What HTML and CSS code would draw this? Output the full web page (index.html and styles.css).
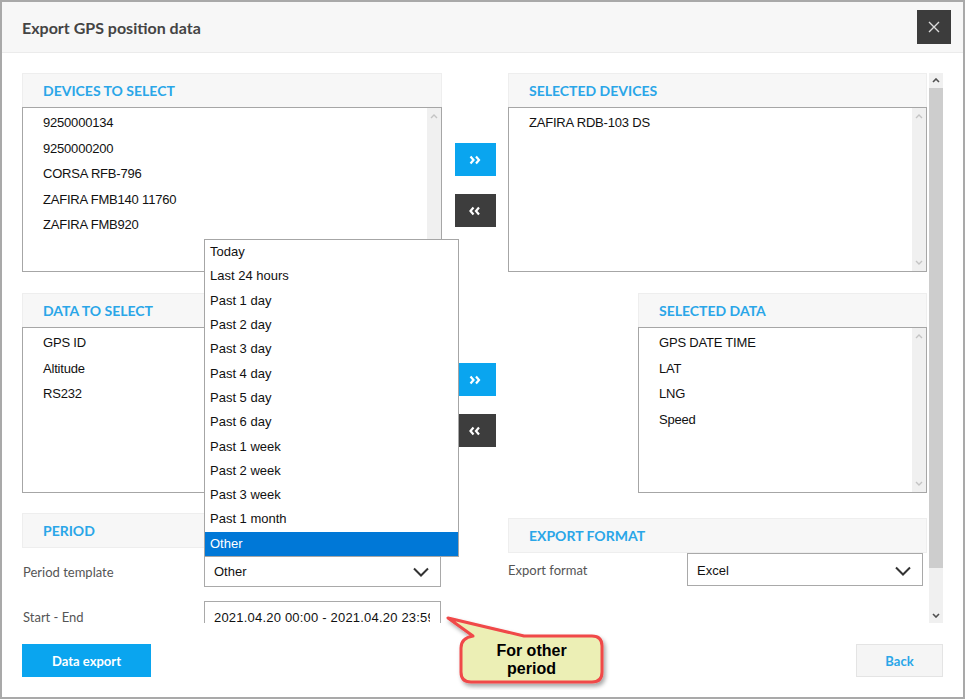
FILE: index.html
```html
<!DOCTYPE html>
<html lang="en">
<head>
    <meta charset="UTF-8">
    <title>Export GPS position data</title>
    <link rel="stylesheet" href="styles.css">
</head>
<body>
    <div class="dialog">
        <div class="dialog-header">
            <h1 class="dialog-title">Export GPS position data</h1>
            <button class="close-btn" aria-label="Close">
                <svg width="12" height="12" viewBox="0 0 12 12"><path d="M1 1L11 11M11 1L1 11" stroke="#dcdcdc" stroke-width="1.4"/></svg>
            </button>
        </div>

        <div class="dialog-body">
            <div class="scroll-area">
                <!-- devices -->
                <div class="picker-row">
                    <div class="panel">
                        <div class="panel-head">DEVICES TO SELECT</div>
                        <div class="list-box">
                            <ul class="list-items">
                                <li>9250000134</li>
                                <li>9250000200</li>
                                <li>CORSA RFB-796</li>
                                <li>ZAFIRA FMB140 11760</li>
                                <li>ZAFIRA FMB920</li>
                            </ul>
                            <div class="list-scroll">
                                <svg class="arrow" width="8" height="5" viewBox="0 0 8 5"><path d="M1 4L4 1L7 4" /></svg>
                                <svg class="arrow" width="8" height="5" viewBox="0 0 8 5"><path d="M1 1L4 4L7 1" /></svg>
                            </div>
                        </div>
                    </div>
                    <div class="move-buttons">
                        <button class="move-btn add"><svg width="12" height="10" viewBox="0 0 12 10"><path d="M1.5 1.5L4.5 5L1.5 8.5M7 1.5L10 5L7 8.5" /></svg></button>
                        <button class="move-btn remove"><svg width="12" height="10" viewBox="0 0 12 10"><path d="M4.5 1.5L1.5 5L4.5 8.5M10 1.5L7 5L10 8.5" /></svg></button>
                    </div>
                    <div class="panel">
                        <div class="panel-head">SELECTED DEVICES</div>
                        <div class="list-box">
                            <ul class="list-items">
                                <li>ZAFIRA RDB-103 DS</li>
                            </ul>
                            <div class="list-scroll">
                                <svg class="arrow" width="8" height="5" viewBox="0 0 8 5"><path d="M1 4L4 1L7 4" /></svg>
                                <svg class="arrow" width="8" height="5" viewBox="0 0 8 5"><path d="M1 1L4 4L7 1" /></svg>
                            </div>
                        </div>
                    </div>
                </div>

                <!-- data fields -->
                <div class="picker-row second">
                    <div class="panel">
                        <div class="panel-head">DATA TO SELECT</div>
                        <div class="list-box tall">
                            <ul class="list-items">
                                <li>GPS ID</li>
                                <li>Altitude</li>
                                <li>RS232</li>
                            </ul>
                            <div class="list-scroll">
                                <svg class="arrow" width="8" height="5" viewBox="0 0 8 5"><path d="M1 4L4 1L7 4" /></svg>
                                <svg class="arrow" width="8" height="5" viewBox="0 0 8 5"><path d="M1 1L4 4L7 1" /></svg>
                            </div>
                        </div>
                    </div>
                    <div class="move-buttons">
                        <button class="move-btn add"><svg width="12" height="10" viewBox="0 0 12 10"><path d="M1.5 1.5L4.5 5L1.5 8.5M7 1.5L10 5L7 8.5" /></svg></button>
                        <button class="move-btn remove"><svg width="12" height="10" viewBox="0 0 12 10"><path d="M4.5 1.5L1.5 5L4.5 8.5M10 1.5L7 5L10 8.5" /></svg></button>
                    </div>
                    <div class="panel narrow">
                        <div class="panel-head">SELECTED DATA</div>
                        <div class="list-box tall">
                            <ul class="list-items">
                                <li>GPS DATE TIME</li>
                                <li>LAT</li>
                                <li>LNG</li>
                                <li>Speed</li>
                            </ul>
                            <div class="list-scroll">
                                <svg class="arrow" width="8" height="5" viewBox="0 0 8 5"><path d="M1 4L4 1L7 4" /></svg>
                                <svg class="arrow" width="8" height="5" viewBox="0 0 8 5"><path d="M1 1L4 4L7 1" /></svg>
                            </div>
                        </div>
                    </div>
                </div>

                <!-- period / format -->
                <div class="settings-row">
                    <div class="settings-col">
                        <div class="panel-head">PERIOD</div>
                        <div class="form-row first">
                            <span class="form-label">Period template</span>
                            <div class="select-box">
                                <span>Other</span>
                                <svg class="chevron" width="16" height="10" viewBox="0 0 16 10"><path d="M1 1.5L8 8.5L15 1.5" /></svg>
                                <ul class="dropdown">
                                    <li>Today</li>
                                    <li>Last 24 hours</li>
                                    <li>Past 1 day</li>
                                    <li>Past 2 day</li>
                                    <li>Past 3 day</li>
                                    <li>Past 4 day</li>
                                    <li>Past 5 day</li>
                                    <li>Past 6 day</li>
                                    <li>Past 1 week</li>
                                    <li>Past 2 week</li>
                                    <li>Past 3 week</li>
                                    <li>Past 1 month</li>
                                    <li class="active">Other</li>
                                </ul>
                            </div>
                        </div>
                        <div class="form-row last">
                            <span class="form-label">Start - End</span>
                            <input class="text-input" type="text" value="2021.04.20 00:00 - 2021.04.20 23:59" readonly>
                        </div>
                    </div>
                    <div></div>
                    <div class="settings-col export">
                        <div class="panel-head">EXPORT FORMAT</div>
                        <div class="form-row">
                            <span class="form-label short">Export format</span>
                            <div class="select-box wide">
                                <span>Excel</span>
                                <svg class="chevron" width="16" height="10" viewBox="0 0 16 10"><path d="M1 1.5L8 8.5L15 1.5" /></svg>
                            </div>
                        </div>
                    </div>
                </div>
            </div>

            <div class="scrollbar">
                <div class="scroll-btn"><svg width="8" height="5" viewBox="0 0 8 5"><path d="M1 4L4 1L7 4" /></svg></div>
                <div class="scroll-track"><div class="scroll-thumb"></div></div>
                <div class="scroll-btn"><svg width="8" height="5" viewBox="0 0 8 5"><path d="M1 1L4 4L7 1" /></svg></div>
            </div>
        </div>

        <div class="dialog-footer">
            <button class="btn-primary">Data export</button>
            <button class="btn-back">Back</button>
        </div>

        <!-- annotation bubble -->
        <div class="callout">
            <svg width="166" height="76" viewBox="0 0 166 76">
                <defs>
                    <filter id="shade" x="-10%" y="-10%" width="130%" height="140%">
                        <feDropShadow dx="2" dy="3" stdDeviation="2" flood-color="#000" flood-opacity="0.35"/>
                    </filter>
                </defs>
                <path d="M4 4L80 22L148 22Q158 22 158 32L158 58Q158 68 148 68L27 68Q17 68 17 58L17 34Q17 24 29 22Z"
                      fill="#ecefb5" stroke="#f04848" stroke-width="3" stroke-linejoin="round" filter="url(#shade)"/>
            </svg>
            <div class="callout-text">For other<br>period</div>
        </div>
    </div>
</body>
</html>
```

FILE: styles.css
```css
body {
    margin: 0;
    background-color: #fff;
    font-family: Lato, "Open Sans", sans-serif;
}
.dialog {
    position: relative;
    width: 965px;
    height: 699px;
    box-sizing: border-box;
    border: 2px solid #a9a9a9;
    background-color: #fff;
}
.dialog-header {
    height: 50px;
    background-color: #f7f7f7;
    border-bottom: 1px solid #ebebeb;
    display: flex;
    align-items: center;
    justify-content: space-between;
    padding: 0 12px 0 20px;
}
.dialog-title {
    margin: 0;
    font-size: 16px;
    font-weight: 700;
    color: #444;
}
.close-btn {
    width: 34px;
    height: 34px;
    padding: 0;
    border: none;
    background-color: #3c3c3c;
    display: flex;
    align-items: center;
    justify-content: center;
}

/* body + fake scrollbar */
.dialog-body {
    display: flex;
    gap: 2px;
    padding: 20px 20px 0 20px;
}
.scroll-area {
    width: 905px;
    height: 550px;
    overflow: hidden;
}
.scrollbar {
    width: 14px;
    height: 550px;
    background-color: #f0f0f0;
    display: flex;
    flex-direction: column;
}
.scroll-btn {
    height: 15px;
    display: flex;
    align-items: center;
    justify-content: center;
}
.scroll-btn path {
    fill: none;
    stroke: #505050;
    stroke-width: 1.6;
}
.scroll-track {
    flex: 1;
}
.scroll-thumb {
    height: 480px;
    background-color: #cdcdcd;
}

/* picker rows */
.picker-row {
    display: grid;
    grid-template-columns: 420px 66px 419px;
    margin-bottom: 21px;
}
.picker-row.second {
    margin-bottom: 20px;
}
.panel.narrow {
    width: 289px;
    justify-self: end;
}
.panel-head {
    height: 34px;
    box-sizing: border-box;
    background-color: #f7f7f7;
    border: 1px solid #eeeeee;
    border-bottom: none;
    padding-left: 20px;
    display: flex;
    align-items: center;
    color: #2aa6e8;
    font-size: 14px;
    font-weight: 700;
}
.list-box {
    height: 165px;
    box-sizing: border-box;
    border: 1px solid #a6a6a6;
    display: flex;
}
.list-box.tall {
    height: 166px;
}
.list-items {
    flex: 1;
    list-style: none;
    margin: 0;
    padding: 2px 0 0 20px;
    font-family: "Liberation Sans", Arial, sans-serif;
    font-size: 13px;
    letter-spacing: -0.2px;
    color: #111;
}
.list-items li {
    height: 25.5px;
    line-height: 25.5px;
}
.list-scroll {
    width: 14px;
    background-color: #f0f0f0;
    display: flex;
    flex-direction: column;
    justify-content: space-between;
    align-items: center;
    padding: 6px 0;
}
.list-scroll path {
    fill: none;
    stroke: #c4c4c4;
    stroke-width: 1.4;
}
.move-buttons {
    display: flex;
    flex-direction: column;
    align-items: center;
    gap: 18px;
    padding-top: 70px;
}
.move-btn {
    width: 41px;
    height: 33px;
    padding: 0;
    border: none;
    display: flex;
    align-items: center;
    justify-content: center;
}
.move-btn path {
    fill: none;
    stroke: #fff;
    stroke-width: 2.2;
}
.move-btn.add {
    background-color: #0aa5ef;
}
.move-btn.remove {
    background-color: #3d3d3d;
}

/* period + export format */
.settings-row {
    display: grid;
    grid-template-columns: 420px 66px 419px;
}
.settings-col .panel-head {
    height: 35px;
    border-bottom: 1px solid #eeeeee;
}
.settings-col.export {
    margin-top: 5px;
}
.form-row {
    display: flex;
    align-items: center;
    margin-top: 14px;
}
.form-row.first {
    margin-top: 8px;
}
.form-row.last {
    align-items: flex-start;
}
.form-row.last .form-label {
    line-height: 12px;
    padding-top: 10px;
}
.export .form-row {
    margin-top: 0;
}
.form-label {
    width: 181px;
    flex-shrink: 0;
    font-size: 13px;
    line-height: 14px;
    color: #555;
    padding-left: 1px;
}
.form-label.short {
    width: 179px;
    padding-left: 0;
}
.select-box {
    position: relative;
    width: 237px;
    height: 31px;
    box-sizing: border-box;
    border: 1px solid #a9a9a9;
    background-color: #fff;
    display: flex;
    align-items: center;
    justify-content: space-between;
    padding: 0 11px 0 9px;
    font-family: "Liberation Sans", Arial, sans-serif;
    font-size: 13px;
    color: #111;
}
.select-box.wide {
    width: 236px;
    height: 33px;
    padding-top: 2px;
}
.chevron path {
    fill: none;
    stroke: #333;
    stroke-width: 2;
}
.text-input {
    width: 237px;
    height: 32px;
    box-sizing: border-box;
    border: 1px solid #a9a9a9;
    padding: 0 10px 0 9px;
    margin: 0;
    font-family: "Liberation Sans", Arial, sans-serif;
    font-size: 13px;
    letter-spacing: 0.2px;
    color: #111;
    outline: none;
}

/* open dropdown list */
.dropdown {
    position: absolute;
    left: -1px;
    bottom: 100%;
    width: 255px;
    box-sizing: border-box;
    margin: 0;
    padding: 0;
    list-style: none;
    background-color: #fff;
    border: 1px solid #a6a6a6;
    z-index: 5;
}
.dropdown li {
    height: 24.3px;
    line-height: 24.3px;
    padding-left: 5px;
}
.dropdown li.active {
    background-color: #0078d7;
    color: #fff;
}

/* footer */
.dialog-footer {
    display: flex;
    justify-content: space-between;
    padding: 21px 20px 0 20px;
}
.btn-primary,
.btn-back {
    height: 33px;
    font-family: Lato, sans-serif;
    font-size: 13px;
    font-weight: 700;
}
.btn-primary {
    width: 129px;
    border: none;
    background-color: #0aa5ef;
    color: #fff;
}
.btn-back {
    width: 87px;
    border: 1px solid #e4e4e4;
    background-color: #f5f5f5;
    color: #2aa6e8;
}

/* annotation */
.callout {
    position: absolute;
    left: 442px;
    top: 612px;
    width: 166px;
    height: 76px;
}
.callout svg {
    display: block;
}
.callout-text {
    position: absolute;
    left: 17px;
    top: 23px;
    width: 141px;
    height: 45px;
    display: flex;
    align-items: center;
    justify-content: center;
    text-align: center;
    font-family: "Liberation Sans", Arial, sans-serif;
    font-size: 16px;
    font-weight: 700;
    line-height: 18px;
    color: #000;
}
```
